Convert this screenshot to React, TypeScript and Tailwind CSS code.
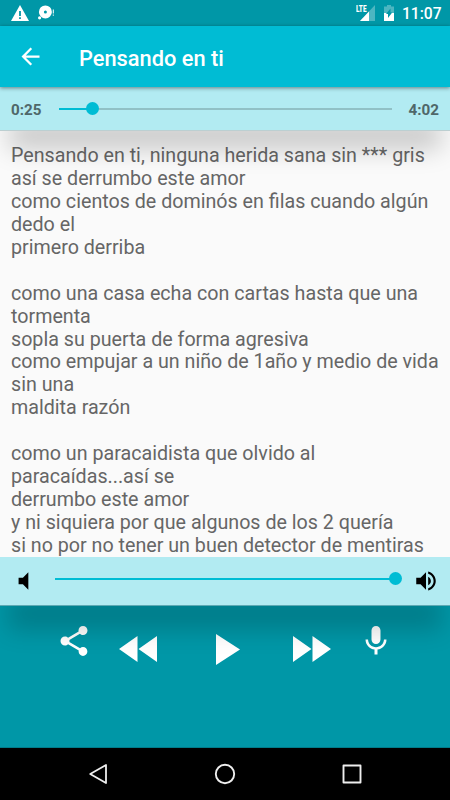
const LYRICS = [
  "Pensando en ti, ninguna herida sana sin *** gris",
  "así se derrumbo este amor",
  "como cientos de dominós en filas cuando algún",
  "dedo el",
  "primero derriba",
  "",
  "como una casa echa con cartas hasta que una",
  "tormenta",
  "sopla su puerta de forma agresiva",
  "como empujar a un niño de 1año y medio de vida",
  "sin una",
  "maldita razón",
  "",
  "como un paracaidista que olvido al",
  "paracaídas...así se",
  "derrumbo este amor",
  "y ni siquiera por que algunos de los 2 quería",
  "si no por no tener un buen detector de mentiras",
];

function StatusBar() {
  return (
    <div className="flex h-[26px] shrink-0 items-center bg-[#0097a7] text-white">
      <svg className="ml-[11px] h-[16px] w-[18px]" viewBox="0 0 18 16" fill="currentColor">
        <path fillRule="evenodd" d="M9 0 18 16H0ZM8.1 6v5h1.8V6ZM8.1 12.3v1.8h1.8v-1.8Z" />
      </svg>
      <svg className="ml-[9px] h-[16px] w-[18px]" viewBox="0 0 18 16" fill="currentColor">
        <path fillRule="evenodd" d="M7.4.4a6.5 6.5 0 1 1 0 13 6.5 6.5 0 0 1 0-13Zm0 5a1.5 1.5 0 1 0 0 3 1.5 1.5 0 0 0 0-3Z" />
        <circle cx="1.6" cy="12.8" r="1.6" />
        <path d="M14.8 4.5h1v4h-1zM14.8 9.5h1v1.2h-1z" />
      </svg>
      <div className="ml-auto flex items-center">
        <svg className="h-[18px] w-[20px]" viewBox="0 0 20 18" fill="currentColor">
          <path d="M19 1v16H4Z" opacity=".3" />
          <path d="M13 7.5V17H4Z" />
          <text x="0" y="8" fontFamily="Roboto" fontWeight="900" fontSize="9" textLength="10.5" lengthAdjust="spacingAndGlyphs">LTE</text>
        </svg>
        <svg className="ml-[8px] h-[16px] w-[10px]" viewBox="0 0 10 16">
          <path d="M3 0h4v1.6h3V16H0V1.6h3Z" fill="#fff" opacity=".3" />
          <path d="M0 8h10v8H0Z" fill="#fff" />
          <path d="M6.5 3.5v4H8.2L4 13V9H2Z" fill="#0097a7" />
        </svg>
        <span className="mt-[4px] mr-[9px] ml-[8px] w-[39px] text-[15.6px] leading-none font-medium">11:07</span>
      </div>
    </div>
  );
}

function AppBar() {
  return (
    <header className="relative z-20 flex h-[61px] shrink-0 items-center bg-[#00bcd4] text-white shadow-[0_1px_4px_rgba(0,0,0,0.45)]">
      <svg className="ml-[17px] h-[27px] w-[27px]" viewBox="0 0 24 24" fill="currentColor">
        <path d="M20 11H7.83l5.59-5.59L12 4l-8 8 8 8 1.41-1.41L7.83 13H20v-2z" />
      </svg>
      <h1 className="mt-[4px] ml-[35px] text-[21.8px] leading-none font-medium">Pensando en ti</h1>
    </header>
  );
}

function SeekBar() {
  return (
    <div className="relative z-10 flex h-[44px] shrink-0 items-center border-b border-[#bccfd1] bg-[#b2ebf2] text-[15.2px] font-bold text-[#4f6769] shadow-[0_26px_26px_-9px_rgba(0,0,0,0.22)]">
      <span className="mt-1 w-[59px] pl-[11px]">0:25</span>
      <div className="relative h-[2px] w-[333px] bg-[#91c1c6]">
        <div className="h-full w-[10%] bg-[#00bcd4]" />
        <div className="absolute -top-[6px] left-[27px] h-[13px] w-[13px] rounded-full bg-[#00bcd4]" />
      </div>
      <span className="mt-1 ml-auto pr-[11px]">4:02</span>
    </div>
  );
}

function VolumeBar() {
  return (
    <div className="relative z-10 flex h-[49px] shrink-0 items-center border-b border-[#5ea9b3] bg-[#b2ebf2] shadow-[0_32px_24px_-8px_rgba(0,0,0,0.18)]">
      <svg className="ml-[11px] h-[26px] w-[26px]" viewBox="0 0 24 24">
        <path d="M7 9v6h4l5 5V4l-5 5H7z" />
      </svg>
      <div className="relative -mt-[5px] ml-[18px] h-[2px] w-[341px] bg-[#00bcd4]">
        <div className="absolute -top-[6px] -right-[6px] h-[13px] w-[13px] rounded-full bg-[#00bcd4]" />
      </div>
      <svg className="ml-[17px] h-[26px] w-[26px]" viewBox="0 0 24 24">
        <path d="M3 9v6h4l5 5V4L7 9H3zm13.5 3c0-1.77-1.02-3.29-2.5-4.03v8.05c1.48-.73 2.5-2.25 2.5-4.02zM14 3.23v2.06c2.89.86 5 3.54 5 6.71s-2.11 5.85-5 6.71v2.06c4.01-.91 7-4.49 7-8.77s-2.99-7.86-7-8.77z" />
      </svg>
    </div>
  );
}

function Controls() {
  return (
    <div className="flex h-[142px] shrink-0 items-start border-b border-[#007c8a] bg-[#0097a7] pt-[17px] text-white">
      <svg className="ml-[56px] h-[36px] w-[36px]" viewBox="0 0 24 24" fill="currentColor">
        <path d="M18 16.08c-.76 0-1.44.3-1.96.77L8.91 12.7c.05-.23.09-.46.09-.7s-.04-.47-.09-.7l7.05-4.11c.54.5 1.25.81 2.04.81 1.66 0 3-1.34 3-3s-1.34-3-3-3-3 1.34-3 3c0 .24.04.47.09.7L8.04 9.81C7.5 9.31 6.79 9 6 9c-1.66 0-3 1.34-3 3s1.34 3 3 3c.79 0 1.5-.31 2.04-.81l7.12 4.16c-.05.21-.08.43-.08.65 0 1.61 1.31 2.92 2.92 2.92 1.61 0 2.92-1.31 2.92-2.92s-1.31-2.92-2.92-2.92z" />
      </svg>
      <svg className="mt-[13px] ml-[27px] h-[26px] w-[38px]" viewBox="0 0 38 26" fill="currentColor">
        <path d="M18.5 0v26L0 13ZM38 0v26L19.5 13Z" />
      </svg>
      <svg className="mt-[11px] ml-[59px] h-[31px] w-[24px]" viewBox="0 0 24 31" fill="currentColor">
        <path d="M0 0v31l24-15.5Z" />
      </svg>
      <svg className="mt-[13px] ml-[53px] h-[26px] w-[38px]" viewBox="0 0 38 26" fill="currentColor">
        <path d="M0 0v26l18.5-13ZM19.5 0v26L38 13Z" />
      </svg>
      <svg className="ml-[27px] h-[36px] w-[36px]" viewBox="0 0 24 24" fill="currentColor">
        <path d="M12 14c1.66 0 2.99-1.34 2.99-3L15 5c0-1.66-1.34-3-3-3S9 3.34 9 5v6c0 1.66 1.34 3 3 3zm5.3-3c0 3-2.54 5.1-5.3 5.1S6.7 14 6.7 11H5c0 3.41 2.72 6.23 6 6.72V21h2v-3.28c3.28-.48 6-3.3 6-6.72h-1.7z" />
      </svg>
    </div>
  );
}

function NavBar() {
  return (
    <nav className="flex h-[52px] shrink-0 items-center bg-black">
      <svg className="ml-[88px] h-[22px] w-[20px]" viewBox="0 0 20 22" fill="none" stroke="#eee" strokeWidth="1.8" strokeLinejoin="round">
        <path d="M18 2v18L2.2 11Z" />
      </svg>
      <svg className="ml-[106px] h-[22px] w-[22px]" viewBox="0 0 22 22" fill="none" stroke="#eee" strokeWidth="1.9">
        <circle cx="11" cy="11" r="9.2" />
      </svg>
      <svg className="ml-[105px] h-[22px] w-[22px]" viewBox="0 0 22 22" fill="none" stroke="#eee" strokeWidth="1.9" strokeLinejoin="round">
        <path d="M2.5 2.5h17v17h-17z" />
      </svg>
    </nav>
  );
}

export default function App() {
  return (
    <div className="flex h-[800px] w-[450px] flex-col overflow-hidden bg-[#fafafa] font-[Roboto,sans-serif]">
      <StatusBar />
      <AppBar />
      <SeekBar />
      <main className="min-h-0 flex-1 overflow-hidden pt-[14.2px] pl-[11px]">
        {LYRICS.map((line, i) => (
          <p key={i} className="h-[22.93px] text-[19.68px] leading-[22.93px] whitespace-nowrap text-[#666]">
            {line}
          </p>
        ))}
      </main>
      <VolumeBar />
      <Controls />
      <NavBar />
    </div>
  );
}
